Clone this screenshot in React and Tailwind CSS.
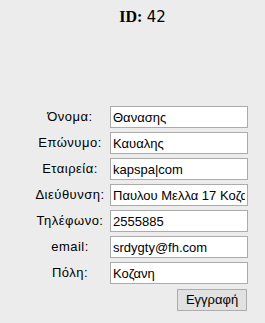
import { useState } from "react";

const FIELDS = [
  { key: "name", label: "Όνομα:", value: "Θανασης" },
  { key: "surname", label: "Επώνυμο:", value: "Καυαλης" },
  { key: "company", label: "Εταιρεία:", value: "kapspa|com" },
  { key: "address", label: "Διεύθυνση:", value: "Παυλου Μελλα 17 Κοζανη" },
  { key: "phone", label: "Τηλέφωνο:", value: "2555885" },
  { key: "email", label: "email:", value: "srdygty@fh.com" },
  { key: "city", label: "Πόλη:", value: "Κοζανη" },
];

export default function App() {
  const [form, setForm] = useState(
    Object.fromEntries(FIELDS.map((f) => [f.key, f.value]))
  );

  return (
    <div className="w-[265px] h-[323px] bg-[#ececec] overflow-hidden font-['Liberation_Sans',Arial,sans-serif] text-[13px] text-black">
      <div className="ml-[35px] w-[215px]">
        {/* Header */}
        <div className="mt-[7px] h-[20px] leading-[20px] text-center text-[16px]">
          <b className="font-['Liberation_Serif',serif]">ID:</b>{" "}
          <span className="font-['DejaVu_Sans',sans-serif] text-[15px]">42</span>
        </div>

        {/* Form */}
        <div className="mt-[79px] grid grid-cols-[70px_138px] gap-x-[5px] gap-y-[4px]">
          {FIELDS.map((f) => (
            <div key={f.key} className="contents">
              <label className="h-[22px] leading-[22px] text-center whitespace-nowrap tracking-[0.5px]">
                {f.label}
              </label>
              <input
                value={form[f.key]}
                onChange={(e) => setForm({ ...form, [f.key]: e.target.value })}
                className="h-[22px] w-[138px] bg-white border border-[#ababab] px-[2px] text-[13px] outline-none"
              />
            </div>
          ))}
          <div />
          <button className="mt-[1px] justify-self-end mr-[1px] w-[70px] h-[22px] bg-[#e1e1e1] border border-[#adadad] text-[13px]">
            Εγγραφή
          </button>
        </div>
      </div>
    </div>
  );
}
